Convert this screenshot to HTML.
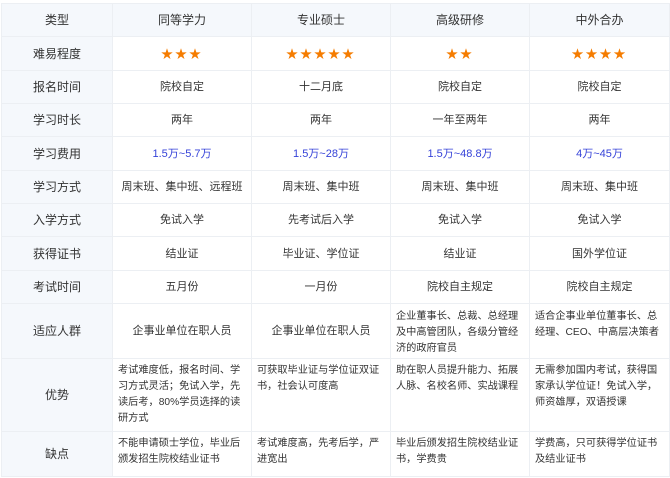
<!DOCTYPE html>
<html><head><meta charset="utf-8"><style>
body{margin:0;background:#fff;width:670px;height:478px;overflow:hidden}
table{position:absolute;left:1px;top:3px;border-collapse:collapse;table-layout:fixed;width:668px;font-family:"Liberation Sans","Noto Sans CJK SC",sans-serif;font-size:11px;color:#333}
td{border:1px solid #eceff3;text-align:center;padding:0 5px;line-height:16px;vertical-align:middle}
td:first-child{background:#f5f8fc;font-size:12px}
tr:first-child td{background:#f5f8fc;font-size:12px}
.l{text-align:left;vertical-align:top;padding-top:4px;font-size:10.2px;line-height:16px}
.b{color:#3542d8}
.s{color:#f57c00;font-size:12px;letter-spacing:2px}
</style></head><body>
<table>
<colgroup><col style="width:111px"><col style="width:139px"><col style="width:139px"><col style="width:139px"><col style="width:140px"></colgroup>
<tr style="height:33px"><td>类型</td><td>同等学力</td><td>专业硕士</td><td>高级研修</td><td>中外合办</td></tr>
<tr style="height:34px"><td>难易程度</td><td class="s">★★★</td><td class="s">★★★★★</td><td class="s">★★</td><td class="s">★★★★</td></tr>
<tr style="height:33px"><td>报名时间</td><td>院校自定</td><td>十二月底</td><td>院校自定</td><td>院校自定</td></tr>
<tr style="height:33px"><td>学习时长</td><td>两年</td><td>两年</td><td>一年至两年</td><td>两年</td></tr>
<tr style="height:34px"><td>学习费用</td><td class="b">1.5万~5.7万</td><td class="b">1.5万~28万</td><td class="b">1.5万~48.8万</td><td class="b">4万~45万</td></tr>
<tr style="height:33px"><td>学习方式</td><td>周末班、集中班、远程班</td><td>周末班、集中班</td><td>周末班、集中班</td><td>周末班、集中班</td></tr>
<tr style="height:33px"><td>入学方式</td><td>免试入学</td><td>先考试后入学</td><td>免试入学</td><td>免试入学</td></tr>
<tr style="height:34px"><td>获得证书</td><td>结业证</td><td>毕业证、学位证</td><td>结业证</td><td>国外学位证</td></tr>
<tr style="height:33px"><td>考试时间</td><td>五月份</td><td>一月份</td><td>院校自主规定</td><td>院校自主规定</td></tr>
<tr style="height:55px"><td>适应人群</td><td>企事业单位在职人员</td><td>企事业单位在职人员</td><td class="l" style="padding-top:5px">企业董事长、总裁、总经理及中高管团队，各级分管经济的政府官员</td><td class="l" style="padding-top:5px">适合企事业单位董事长、总经理、CEO、中高层决策者</td></tr>
<tr style="height:73px"><td>优势</td><td class="l">考试难度低，报名时间、学习方式灵活；免试入学，先读后考，80%学员选择的读研方式</td><td class="l">可获取毕业证与学位证双证书，社会认可度高</td><td class="l">助在职人员提升能力、拓展人脉、名校名师、实战课程</td><td class="l">无需参加国内考试，获得国家承认学位证！免试入学，师资雄厚，双语授课</td></tr>
<tr style="height:45px"><td>缺点</td><td class="l">不能申请硕士学位，毕业后颁发招生院校结业证书</td><td class="l">考试难度高，先考后学，严进宽出</td><td class="l">毕业后颁发招生院校结业证书，学费贵</td><td class="l">学费高，只可获得学位证书及结业证书</td></tr>
</table>
</body></html>
